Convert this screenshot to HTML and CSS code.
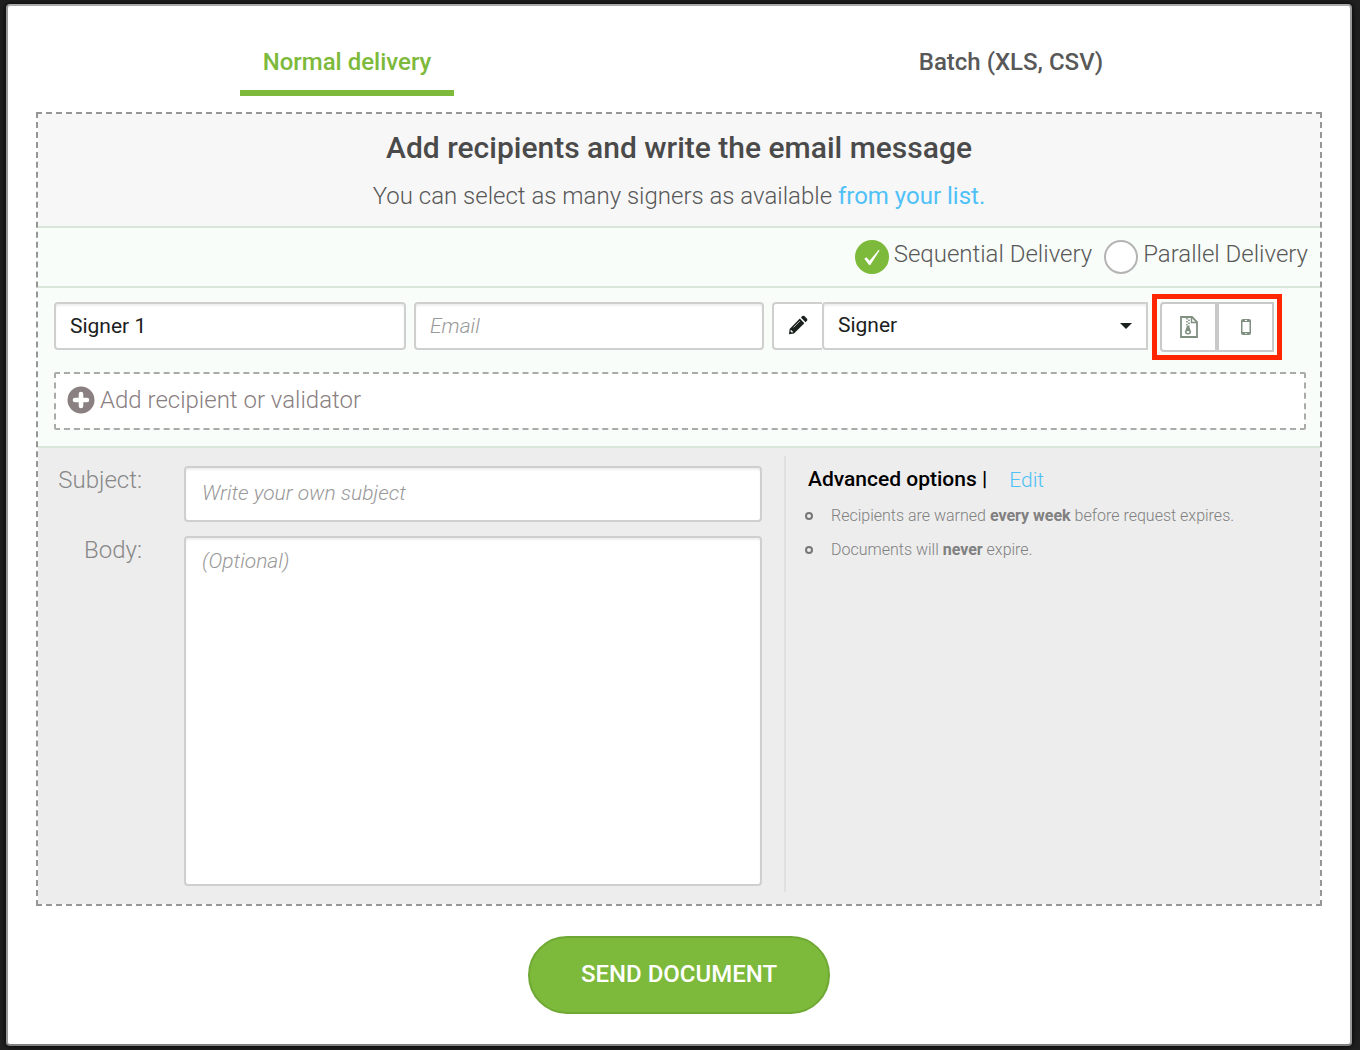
FILE: index.html
```html
<!DOCTYPE html>
<html lang="en">
<head>
<meta charset="utf-8">
<meta name="viewport" content="width=device-width, initial-scale=1">
<title>Send document</title>
<link rel="stylesheet" href="styles.css">
</head>
<body>
<main class="dialog">
  <nav class="tabs">
    <div class="tab-slot"><a class="tab tab-active" href="#normal">Normal delivery</a></div>
    <div class="tab-slot"><a class="tab" href="#batch">Batch (XLS, CSV)</a></div>
  </nav>
  <form class="form">
    <div class="panel">
      <header class="intro">
        <h1 class="title">Add recipients and write the email message</h1>
        <p class="lead">You can select as many signers as available <a class="link" href="#list">from your list.</a></p>
      </header>

      <div class="delivery">
        <label class="choice">
          <span class="dot">
            <input class="radio" type="radio" name="delivery" value="sequential" checked>
            <svg class="tick" viewBox="0 0 34 34" aria-hidden="true"><path d="M9.300 18.800l2.200-1.500 3 3.500 9.200-11 .9.700-9.300 14.500h-1.200z"/></svg>
          </span>
          <span>Sequential Delivery</span>
        </label>
        <label class="choice">
          <span class="dot">
            <input class="radio" type="radio" name="delivery" value="parallel">
            <svg class="tick" viewBox="0 0 34 34" aria-hidden="true"><path d="M9.300 18.800l2.200-1.500 3 3.500 9.200-11 .9.700-9.300 14.500h-1.200z"/></svg>
          </span>
          <span>Parallel Delivery</span>
        </label>
      </div>

      <section class="recipients">
        <div class="recipient">
          <input class="field" type="text" aria-label="Name" value="Signer 1">
          <input class="field" type="email" aria-label="Email" placeholder="Email">
          <div class="role">
            <label class="role-icon" for="role" aria-label="Role">
              <svg width="20" height="20" viewBox="0 0 20 20" aria-hidden="true">
                <path fill="#1b211d" d="M11.800 3.600l4.600 4.600L6 18.500 1 19.200l.6-5.200z"/>
                <path fill="#1b211d" d="M12.900 2.600l1.500-1.500q1-.8 2 0l2.600 2.600q.8 1 0 2l-1.500 1.500z"/>
                <path fill="none" stroke="#fff" stroke-width=".7" d="M5.500 12.400l6.300-6.300"/>
                <path fill="#fff" d="M2.700 15l1 .1v1.200h1.200l.1 1-1.300.3-1.200-1.200z"/>
              </svg>
            </label>
            <select class="role-select" id="role">
              <option>Signer</option>
              <option>Validator</option>
            </select>
            <svg class="caret" width="12" height="6" viewBox="0 0 12 6" aria-hidden="true"><path fill="#1b211d" d="M0 0h12L6 6z"/></svg>
          </div>
          <div class="extras">
            <button class="extra" type="button" aria-label="Attachments">
              <svg width="18" height="22" viewBox="0 0 18 22" fill="none" stroke="#7f8f80" aria-hidden="true">
                <path stroke-width="1.800" d="M1 1h11l5 5v15H1z"/>
                <path stroke-width="1.400" d="M11.500 1v5.500H17"/>
                <path stroke-width="1.600" stroke-dasharray="1.500 1.500" d="M7 2v8M9 3.500v7"/>
                <path fill="#7f8f80" stroke="none" d="M7 10h2l2 5.500q.4 3-3 3t-3-3z"/>
                <path fill="#fff" stroke="none" d="M6.500 15.500q1.500-1 3 0 .3 1.500-1.500 1.500t-1.500-1.500z"/>
              </svg>
            </button>
            <button class="extra" type="button" aria-label="Mobile phone">
              <svg width="10" height="16" viewBox="0 0 10 16" aria-hidden="true">
                <path fill="#7f8f80" fill-rule="evenodd" d="M2 0h6q2 0 2 2v12q0 2-2 2H2q-2 0-2-2V2q0-2 2-2zM1.500 3v10h7V3zM4 1v1h2V1zM4.300 14v1h1.400v-1z"/>
              </svg>
            </button>
          </div>
        </div>
        <button class="add" type="button">
          <svg width="28" height="28" viewBox="0 0 28 28" aria-hidden="true"><circle cx="14" cy="14" r="13.500" fill="#8a8081"/><path stroke="#fff" stroke-width="4.600" stroke-linecap="round" d="M14 8v12M8 14h12"/></svg>
          <span>Add recipient or validator</span>
        </button>
      </section>

      <section class="message">
        <div class="compose">
          <label class="label" for="subject">Subject:</label>
          <input class="field subject" id="subject" type="text" placeholder="Write your own subject">
          <label class="label" for="body">Body:</label>
          <textarea class="field body-text" id="body" placeholder="(Optional)"></textarea>
        </div>
        <aside class="advanced">
          <div class="advanced-head">
            <h2 class="advanced-title">Advanced options |</h2>
            <a class="link" href="#edit">Edit</a>
          </div>
          <ul class="notes">
            <li class="note">Recipients are warned <b>every week</b> before request expires.</li>
            <li class="note">Documents will <b>never</b> expire.</li>
          </ul>
        </aside>
      </section>
    </div>
    <button class="send" type="submit">SEND DOCUMENT</button>
  </form>
</main>
</body>
</html>
```

FILE: styles.css
```css
*, *::before {
  box-sizing: border-box;
}

body {
  margin: 0;
  min-height: 100vh;
  padding: 4px 8px 4px 6px;
  display: flex;
  background: #202020;
  color: #585858;
  font-family: Roboto, "Liberation Sans", sans-serif;
  font-size: 24px;
  font-weight: 300;
  line-height: 28px;
}

h1, h2, p, ul {
  margin: 0;
  padding: 0;
}

input, select, textarea, button {
  font: inherit;
  margin: 0;
}

a {
  text-decoration: none;
}

b {
  font-weight: 700;
}

.link {
  color: #4fc1f7;
  font-weight: 400;
}

.dialog {
  flex: 1;
  min-width: 0;
  background: #fff;
  border: 2px solid #999;
  border-top-color: #aaa;
  border-bottom-color: #808080;
  border-radius: 4px;
  box-shadow: 0 0 6px #000;
}

.tabs {
  display: flex;
  padding: 42px 7px 0;
}

.tab-slot {
  flex: 1;
  display: flex;
  justify-content: center;
}

.tab {
  padding: 0 23px 14px;
  border-bottom: 6px solid transparent;
  color: #585858;
  font-weight: 500;
}

.tab-active {
  color: #7db93a;
  border-color: #7db93a;
}

.form {
  display: flex;
  flex-direction: column;
  align-items: center;
  padding: 16px 28px 30px;
}

.panel {
  align-self: stretch;
  border: 2px dashed #969696;
  background-clip: padding-box;
}

.intro {
  padding: 16px;
  background: #f7f7f7;
  border-bottom: 2px solid #d9e6d9;
  text-align: center;
}

.title {
  color: #4a4a4a;
  font-size: 30px;
  font-weight: 500;
  line-height: 36px;
}

.lead {
  padding-top: 16px;
}

.delivery {
  display: flex;
  justify-content: flex-end;
  gap: 12px;
  padding: 12px;
  background: #f8fdf9;
  border-bottom: 2px solid #d9e6d9;
}

.choice {
  display: flex;
  gap: 5px;
}

.dot {
  display: grid;
}

.radio, .tick {
  grid-area: 1 / 1;
  width: 34px;
  height: 34px;
}

.radio {
  appearance: none;
  border: 2px solid #b4b4b4;
  border-radius: 50%;
  background: #fff;
}

.radio:checked {
  border-color: #7db93a;
  background: #7db93a;
}

.tick {
  fill: #fff;
  pointer-events: none;
}

.recipients {
  padding: 14px 14px 16px 16px;
  background: #f8fdf9;
  border-bottom: 2px solid #d9e6d9;
}

.recipient {
  display: grid;
  grid-template-columns: 176fr 175fr 190fr 114px;
  align-items: start;
  column-gap: 8px;
  padding-right: 32px;
}

.field {
  width: 100%;
  min-width: 0;
  height: 48px;
  padding: 0 14px;
  border: 2px solid #cfcfcf;
  border-radius: 4px;
  background: #fff;
  box-shadow: inset 0 2px 2px #f0eeee;
  color: #1b211d;
  font-size: 21px;
  font-weight: 400;
}

.field::placeholder {
  color: #999;
  font-style: italic;
  font-weight: 300;
  opacity: 1;
}

.role {
  display: grid;
  grid-template-columns: 50px 1fr;
  margin-right: 4px;
}

.role-icon {
  display: flex;
  align-items: center;
  justify-content: center;
  padding-bottom: 2px;
  border: 2px solid #cfcfcf;
  border-right: 0;
  border-radius: 4px 0 0 4px;
  background: #fff;
}

.role-select {
  grid-area: 1 / 2;
  width: 100%;
  height: 48px;
  padding: 0 14px 2px;
  appearance: none;
  border: 2px solid #cfcfcf;
  border-radius: 4px 0 0 4px;
  background: #fff;
  box-shadow: inset 0 2px 2px #f0eeee;
  color: #1b211d;
  font-size: 21px;
  font-weight: 400;
}

.caret {
  grid-area: 1 / 2;
  align-self: center;
  justify-self: end;
  margin-right: 16px;
  pointer-events: none;
}

.extras {
  display: flex;
  height: 50px;
  outline: 5px solid #ff2600;
  outline-offset: 3px;
}

.extra {
  flex: 1;
  display: flex;
  align-items: center;
  justify-content: center;
  padding: 0;
  border: 2px solid #c9c9c9;
  background: #fff;
}

.extra:first-child {
  border-radius: 4px 0 0 4px;
}

.add {
  display: flex;
  align-items: center;
  gap: 5px;
  width: 100%;
  height: 58px;
  margin-top: 20px;
  padding: 0 11px 2px;
  border: 2px dashed #aaa;
  border-radius: 2px;
  background: #fff;
  background-clip: padding-box;
  color: #8a8081;
}

.message {
  display: grid;
  grid-template-columns: 373fr 268fr;
  padding: 8px 0 12px;
  background: #ededed;
}

.compose {
  display: grid;
  grid-template-columns: 146px 1fr;
  row-gap: 14px;
  padding: 10px 22px 6px 0;
}

.label {
  padding-right: 42px;
  color: #888;
  text-align: right;
}

.subject {
  height: 56px;
  padding: 0 16px 2px;
}

.body-text {
  display: block;
  height: 350px;
  padding: 9px 16px;
  resize: none;
}

.advanced {
  padding: 10px 22px;
  border-left: 2px solid #e0e0e0;
}

.advanced-head {
  display: flex;
  gap: 22px;
  font-size: 21px;
}

.advanced-head .link {
  font-weight: 300;
}

.advanced-title {
  color: #000;
  font-size: 21px;
  font-weight: 500;
  line-height: 26px;
}

.notes {
  display: grid;
  gap: 10px;
  padding-top: 10px;
  list-style: none;
}

.note {
  display: flex;
  align-items: center;
  white-space: pre-wrap;
  color: #808080;
  font-size: 16px;
  line-height: 24px;
}

.note::before {
  content: "";
  flex: none;
  width: 8px;
  height: 8px;
  margin: 0 18px 0 -3px;
  border: 2px solid #777;
  border-radius: 50%;
}

.send {
  min-width: 302px;
  height: 78px;
  margin-top: 30px;
  padding: 0 40px 2px;
  border: 2px solid #6fa834;
  border-radius: 39px;
  background: #7db93a;
  color: #fff;
  font-weight: 500;
}
```
